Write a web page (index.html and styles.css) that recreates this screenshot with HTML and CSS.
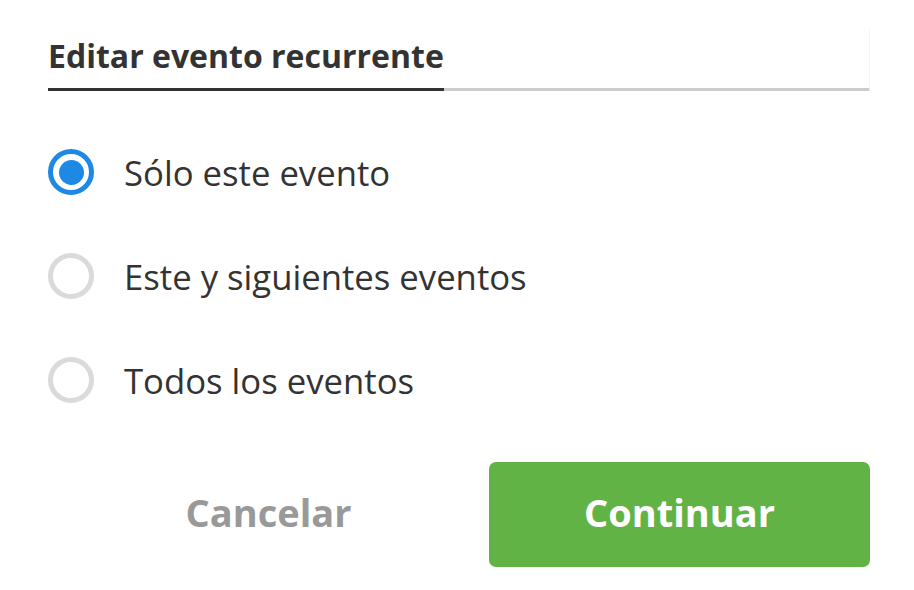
FILE: index.html
```html
<!DOCTYPE html>
<html lang="es">
<head>
<meta charset="utf-8">
<title>Editar evento recurrente</title>
<link rel="stylesheet" href="styles.css">
</head>
<body>
<div class="dialog">
  <div class="tabs">
    <div class="tab active">Editar evento recurrente</div>
    <div class="tab-rest"></div>
  </div>
  <ul class="options">
    <li class="option"><span class="radio checked"></span><span class="label">Sólo este evento</span></li>
    <li class="option"><span class="radio"></span><span class="label">Este y siguientes eventos</span></li>
    <li class="option"><span class="radio"></span><span class="label">Todos los eventos</span></li>
  </ul>
  <div class="actions">
    <button class="btn btn-cancel">Cancelar</button>
    <button class="btn btn-primary">Continuar</button>
  </div>
</div>
</body>
</html>
```
FILE: styles.css
```css
html, body {
  margin: 0;
  padding: 0;
  background: #ffffff;
}
body {
  font-family: "Open Sans", "Noto Sans", sans-serif;
  color: #333333;
}
.dialog {
  width: 822px;
  margin-left: 48px;
  padding-top: 30px;
}
.tabs {
  display: flex;
  align-items: flex-end;
  border-right: 1px solid #f3f3f3;
}
.tab {
  font-size: 32px;
  font-weight: 700;
  line-height: 40px;
  padding-top: 6px;
  padding-bottom: 12px;
  border-bottom: 3px solid #333333;
  white-space: nowrap;
  color: #333333;
}
.tab-rest {
  flex: 1;
  border-bottom: 3px solid #cccccc;
}
.options {
  list-style: none;
  margin: 0;
  padding: 0;
  padding-top: 29px;
}
.option {
  display: flex;
  align-items: center;
  height: 104px;
  gap: 30px;
}
.radio {
  box-sizing: border-box;
  width: 46px;
  height: 46px;
  border-radius: 50%;
  border: 5px solid #dadada;
  display: flex;
  align-items: center;
  justify-content: center;
  flex: none;
}
.radio.checked {
  border-color: #1e88e5;
}
.radio.checked::after {
  content: "";
  width: 25px;
  height: 25px;
  border-radius: 50%;
  background: #1e88e5;
}
.label {
  font-size: 34.7px;
  color: #333333;
}
.actions {
  display: flex;
  margin-top: 30px;
}
.btn {
  font-family: "Open Sans", "Noto Sans", sans-serif;
  font-weight: 700;
  font-size: 38px;
  border: none;
  height: 105px;
  flex: 1;
  padding: 0 0 5px 0;
  cursor: pointer;
}
.btn-cancel {
  background: transparent;
  color: #999999;
}
.btn-primary {
  background: #62b346;
  color: #ffffff;
  border-radius: 7px;
  flex: none;
  width: 381px;
}
```
